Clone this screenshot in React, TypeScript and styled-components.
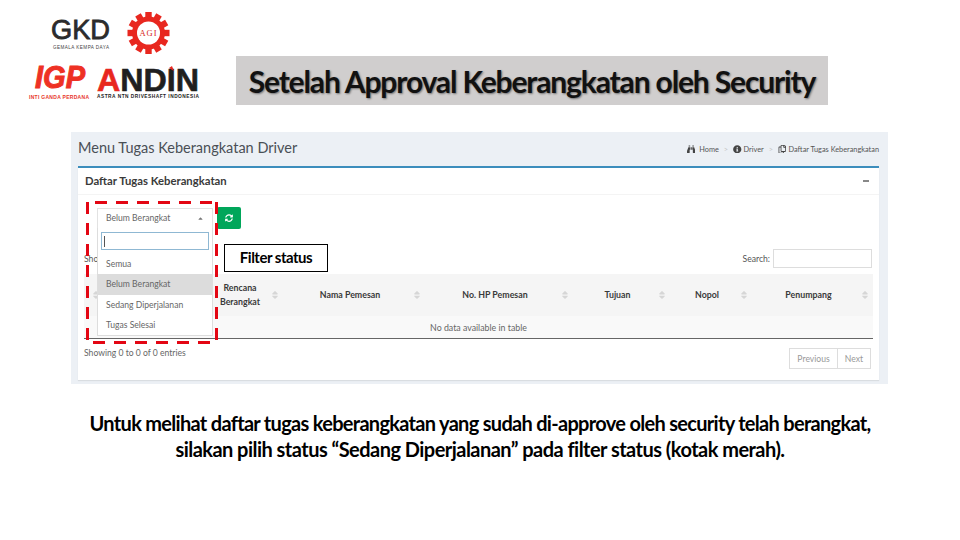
import React from 'react'
import styled, { createGlobalStyle } from 'styled-components'
import { FaBinoculars, FaInfoCircle, FaRegCopy, FaSyncAlt, FaSort, FaCaretUp } from 'react-icons/fa'

const GlobalStyle = createGlobalStyle`
  html, body {
    margin: 0;
    padding: 0;
    background: #fff;
  }
`

const Slide = styled.div`
  width: 960px;
  height: 540px;
  overflow: hidden;
  background: #fff;
  display: flex;
  flex-direction: column;
  font-family: 'Lato', 'Liberation Sans', sans-serif;
`

const Header = styled.header`
  height: 132px;
  display: flex;
  padding-left: 29px;
  box-sizing: border-box;
`

const Logos = styled.div`
  width: 207px;
  display: flex;
  flex-direction: column;
  padding-top: 12px;
  box-sizing: border-box;
`

const LogoRow = styled.div<{ $gap: number; $indent: number; $height: number }>`
  display: flex;
  align-items: flex-start;
  height: ${(p) => p.$height}px;
  gap: ${(p) => p.$gap}px;
  padding-left: ${(p) => p.$indent}px;
`

const LogoSvg = styled.svg`
  overflow: visible;
  flex: none;
`

const TitleBar = styled.div`
  width: 592px;
  height: 49px;
  margin-top: 56px;
  background: #d0cece;
  display: flex;
  align-items: center;
  justify-content: center;
`

const TitleText = styled.h1`
  margin: 0;
  font-size: 30px;
  font-weight: 700;
  letter-spacing: -1.14px;
  color: #111;
  text-shadow: 1px 1px 2px rgba(0, 0, 0, 0.45);
  white-space: nowrap;
`

const Shot = styled.section`
  position: relative;
  width: 817px;
  height: 252px;
  margin-left: 71px;
  background: #ecf0f5;
  box-sizing: border-box;
  padding: 0 9px 4px 7px;
  display: flex;
  flex-direction: column;
  color: #444;
`

const ShotTop = styled.div`
  height: 34px;
  padding-bottom: 3px;
  box-sizing: border-box;
  display: flex;
  align-items: center;
  justify-content: space-between;
`

const ShotTitle = styled.div`
  font-size: 14.5px;
  color: #4a4f55;
`

const Crumbs = styled.div`
  display: flex;
  align-items: center;
  font-size: 7.35px;
  color: #555;
  white-space: nowrap;
  padding-top: 3px;
`

const Crumb = styled.span`
  display: inline-flex;
  align-items: center;
  gap: 2px;
  svg {
    font-size: 8.5px;
    flex: none;
    color: #444;
  }
`

const CrumbHome = styled(Crumb)`
  gap: 4px;
`

const CrumbSep = styled.span`
  color: #c4c4c4;
  margin: 0 5px;
`

const Card = styled.div`
  flex: 1;
  background: #fff;
  border-top: 2px solid #3c8dbc;
  display: flex;
  flex-direction: column;
  box-shadow: 0 1px 1px rgba(0, 0, 0, 0.08);
`

const CardHead = styled.div`
  height: 26px;
  padding: 0 7px;
  display: flex;
  align-items: center;
  justify-content: space-between;
  border-bottom: 1px solid #f4f4f4;
`

const CardTitle = styled.div`
  font-size: 11.3px;
  font-weight: 700;
  color: #3a3a3a;
  padding-bottom: 2px;
`

const Collapse = styled.span`
  width: 6px;
  height: 1.5px;
  background: #888;
  margin-right: 3px;
`

const CardBody = styled.div`
  flex: 1;
  padding: 12px 6px 0;
  display: flex;
  flex-direction: column;
`

const FilterRow = styled.div`
  height: 22px;
  padding-left: 13px;
  display: flex;
  align-items: center;
  gap: 4px;
`

const SelectBox = styled.div`
  width: 116px;
  height: 20px;
  box-sizing: border-box;
  background: #fff;
  border: 1px solid #e2e2e2;
  border-bottom: none;
  padding: 0 8px 1px;
  display: flex;
  align-items: center;
  justify-content: space-between;
  font-size: 8.6px;
  color: #666;
  svg {
    font-size: 7px;
    color: #777;
  }
`

const RefreshButton = styled.button`
  width: 24px;
  height: 22px;
  border: none;
  border-radius: 2px;
  background: #00a65a;
  color: #fff;
  padding: 0;
  display: flex;
  align-items: center;
  justify-content: center;
  font-size: 8px;
`

const TableTools = styled.div`
  height: 23px;
  margin-top: 18px;
  display: flex;
  align-items: center;
  justify-content: space-between;
  font-size: 8.6px;
  color: #555;
  padding-bottom: 4px;
  box-sizing: content-box;
`

const SearchWrap = styled.label`
  display: flex;
  align-items: center;
  gap: 3px;
  padding-right: 1px;
`

const SearchInput = styled.input`
  width: 99px;
  height: 19px;
  box-sizing: border-box;
  border: 1px solid #ddd;
  background: #fff;
`

const DataTable = styled.table`
  width: 789px;
  border-collapse: collapse;
  table-layout: fixed;
  font-size: 8.8px;
`

const HeadCell = styled.th`
  position: relative;
  height: 42px;
  padding: 0 8px 0 0;
  background: #f5f5f5;
  font-weight: 700;
  text-align: center;
  color: #3a3a3a;
  line-height: 14px;
`

const SortMark = styled.span`
  position: absolute;
  right: 3px;
  top: 16px;
  color: #d6d6d6;
  font-size: 10px;
  line-height: 10px;
`

const EmptyCell = styled.td`
  height: 22px;
  padding: 0;
  background: #f9f9f9;
  text-align: center;
  color: #666;
  border-bottom: 1.5px solid #666;
`

const TableFoot = styled.div`
  display: flex;
  justify-content: space-between;
  align-items: flex-start;
  padding-top: 9px;
  font-size: 8.6px;
  color: #666;
`

const Pager = styled.div`
  display: flex;
  margin-right: 2px;
`

const PageButton = styled.span`
  height: 21px;
  padding: 0 7px;
  box-sizing: border-box;
  border: 1px solid #ddd;
  background: #fff;
  color: #999;
  display: flex;
  align-items: center;
  & + & {
    border-left: none;
  }
`

const Dropdown = styled.div`
  position: absolute;
  left: 26px;
  top: 96px;
  width: 116px;
  height: 108px;
  box-sizing: border-box;
  background: #fff;
  border: 1px solid #ddd;
  border-top: none;
  padding-top: 4px;
  font-size: 8.6px;
  color: #666;
`

const DropdownSearch = styled.div`
  height: 18px;
  margin: 0 3px 4px;
  box-sizing: border-box;
  border: 1px solid #8fb8d3;
  padding-left: 2px;
  display: flex;
  align-items: center;
`

const Cursor = styled.span`
  width: 1px;
  height: 11px;
  background: #555;
`

const DropdownItem = styled.div<{ $active?: boolean }>`
  height: 20.25px;
  padding-left: 8px;
  display: flex;
  align-items: center;
  background: ${(p) => (p.$active ? '#dcdcdc' : 'transparent')};
`

const Marker = styled.svg`
  position: absolute;
  left: 15px;
  top: 69px;
`

const Callout = styled.div`
  position: absolute;
  left: 153px;
  top: 112px;
  width: 104px;
  height: 28px;
  box-sizing: border-box;
  border: 1px solid #000;
  background: #fff;
  color: #000;
  font-size: 15px;
  font-weight: 700;
  letter-spacing: -0.5px;
  padding-bottom: 2px;
  display: flex;
  align-items: center;
  justify-content: center;
`

const Caption = styled.p`
  margin: 26px 0 0;
  text-align: center;
  font-size: 20px;
  line-height: 26px;
  font-weight: 700;
  color: #000;
`

const CaptionLine = styled.span<{ $spacing: number }>`
  display: block;
  letter-spacing: ${(p) => p.$spacing}px;
`

const GkdLogo = () => (
  <LogoSvg width="60" height="38" viewBox="0 0 60 38">
    <text x="0" y="27" fontFamily="Liberation Sans" fontSize="27" fill="#2b2b2b" stroke="#2b2b2b" strokeWidth="0.8" textLength="59" lengthAdjust="spacingAndGlyphs">GKD</text>
    <text x="2" y="37" fontFamily="Liberation Sans" fontSize="4.6" fill="#444" textLength="56">GEMALA KEMPA DAYA</text>
  </LogoSvg>
)

const AgiLogo = () => {
  const teeth = Array.from({ length: 12 }, (_, i) => i * 30)
  return (
    <LogoSvg width="43" height="42" viewBox="0 0 43 42">
      <g transform="translate(21.5 21)">
        {teeth.map((a) => (
          <rect key={a} x="-3.2" y="-21" width="6.4" height="7" fill="#e8271f" transform={`rotate(${a})`} />
        ))}
        <circle r="16.5" fill="#e8271f" />
        <circle r="11.5" fill="#fff" />
        <text y="3" textAnchor="middle" fontFamily="Liberation Serif" fontSize="8.5" letterSpacing="1" fill="#d8261e">AGI</text>
      </g>
    </LogoSvg>
  )
}

const IgpLogo = () => (
  <LogoSvg width="62" height="36" viewBox="0 0 62 36">
    <text x="6" y="22" fontFamily="Liberation Sans" fontWeight="700" fontStyle="italic" fontSize="31" fill="#ee3124" stroke="#ee3124" strokeWidth="1" textLength="50" lengthAdjust="spacingAndGlyphs">IGP</text>
    <text x="0" y="33" fontFamily="Liberation Sans" fontWeight="700" fontSize="5" fill="#e8372c" textLength="60">INTI GANDA PERDANA</text>
  </LogoSvg>
)

const AndinLogo = () => (
  <LogoSvg width="103" height="33" viewBox="0 0 103 33">
    <text x="0" y="25" fontFamily="Liberation Sans" fontWeight="700" fontSize="31" textLength="102" lengthAdjust="spacingAndGlyphs" fill="#1f1f1f" stroke="#1f1f1f" strokeWidth="0.6">
      <tspan fill="#e8271f" stroke="#e8271f">A</tspan>NDIN
    </text>
    <polygon points="72,2 75,0 77,5" fill="#e8271f" />
    <text x="0" y="32" fontFamily="Liberation Sans" fontWeight="700" fontSize="4.8" fill="#222" textLength="102">ASTRA NTN DRIVESHAFT INDONESIA</text>
  </LogoSvg>
)

const headers = ['', '', 'Rencana Berangkat', 'Nama Pemesan', 'No. HP Pemesan', 'Tujuan', 'Nopol', 'Penumpang']
const widths = [20, 101, 78, 142, 148, 97, 82, 121]
const statusOptions = ['Semua', 'Belum Berangkat', 'Sedang Diperjalanan', 'Tugas Selesai']

export default function App() {
  return (
    <Slide>
      <GlobalStyle />
      <Header>
        <Logos>
          <LogoRow $gap={16} $indent={22} $height={54}>
            <GkdLogo />
            <AgiLogo />
          </LogoRow>
          <LogoRow $gap={6} $indent={0} $height={36}>
            <IgpLogo />
            <AndinLogo />
          </LogoRow>
        </Logos>
        <TitleBar>
          <TitleText>Setelah Approval Keberangkatan oleh Security</TitleText>
        </TitleBar>
      </Header>

      <Shot>
        <ShotTop>
          <ShotTitle>Menu Tugas Keberangkatan Driver</ShotTitle>
          <Crumbs>
            <CrumbHome><FaBinoculars />Home</CrumbHome>
            <CrumbSep>&gt;</CrumbSep>
            <Crumb><FaInfoCircle />Driver</Crumb>
            <CrumbSep>&gt;</CrumbSep>
            <Crumb><FaRegCopy />Daftar Tugas Keberangkatan</Crumb>
          </Crumbs>
        </ShotTop>
        <Card>
          <CardHead>
            <CardTitle>Daftar Tugas Keberangkatan</CardTitle>
            <Collapse />
          </CardHead>
          <CardBody>
            <FilterRow>
              <SelectBox>Belum Berangkat<FaCaretUp /></SelectBox>
              <RefreshButton><FaSyncAlt /></RefreshButton>
            </FilterRow>
            <TableTools>
              <span>Show</span>
              <SearchWrap>Search:<SearchInput /></SearchWrap>
            </TableTools>
            <DataTable>
              <colgroup>
                {widths.map((w, i) => <col key={i} style={{ width: w }} />)}
              </colgroup>
              <thead>
                <tr>
                  {headers.map((h, i) => (
                    <HeadCell key={i}>
                      {h}
                      <SortMark><FaSort /></SortMark>
                    </HeadCell>
                  ))}
                </tr>
              </thead>
              <tbody>
                <tr>
                  <EmptyCell colSpan={8}>No data available in table</EmptyCell>
                </tr>
              </tbody>
            </DataTable>
            <TableFoot>
              <span>Showing 0 to 0 of 0 entries</span>
              <Pager>
                <PageButton>Previous</PageButton>
                <PageButton>Next</PageButton>
              </Pager>
            </TableFoot>
          </CardBody>
        </Card>

        <Dropdown>
          <DropdownSearch><Cursor /></DropdownSearch>
          {statusOptions.map((o) => (
            <DropdownItem key={o} $active={o === 'Belum Berangkat'}>{o}</DropdownItem>
          ))}
        </Dropdown>
        <Marker width="133" height="143" viewBox="0 0 133 143">
          <g stroke="#e30613" strokeWidth="3" strokeDasharray="12 9">
            <line x1="9" y1="1.5" x2="128" y2="1.5" />
            <line x1="1.5" y1="1" x2="1.5" y2="142" />
            <line x1="7" y1="141.5" x2="126" y2="141.5" />
            <line x1="130.5" y1="1" x2="130.5" y2="142" />
          </g>
        </Marker>
        <Callout>Filter status</Callout>
      </Shot>

      <Caption>
        <CaptionLine $spacing={-0.7}>
          Untuk melihat daftar tugas keberangkatan yang sudah di-approve oleh security telah berangkat,
        </CaptionLine>
        <CaptionLine $spacing={-0.53}>
          silakan pilih status “Sedang Diperjalanan” pada filter status (kotak merah).
        </CaptionLine>
      </Caption>
    </Slide>
  )
}
